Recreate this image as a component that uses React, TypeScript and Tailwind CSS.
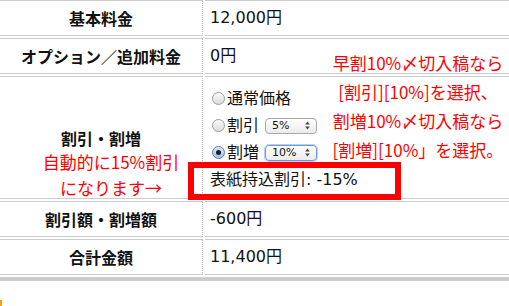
import type { ReactNode } from "react";

// 料金テーブルの1行
function Row({ label, tall, children }: { label: string; tall?: boolean; children: ReactNode }) {
  return (
    <div className={`flex gap-[2px] ${tall ? "h-[123px]" : "h-[36px]"}`}>
      <div className="flex w-[203px]">
        <div className="flex flex-1 items-center justify-center border-y border-[#cccccc] text-[16px] font-bold">
          {label}
        </div>
        <div className="w-0 border-l border-dotted border-[#bbbbbb]" />
      </div>
      <div className="flex flex-1 border-y border-[#cccccc] pl-[5px] font-['DejaVu_Sans','Noto_Sans_CJK_JP',sans-serif] text-[16px]">
        {children}
      </div>
    </div>
  );
}

function Radio({ checked }: { checked?: boolean }) {
  return (
    <span
      className={`mr-[2px] ml-[2px] flex h-[13px] w-[13px] items-center justify-center rounded-full border ${
        checked
          ? "border-[#5d7fae] bg-linear-to-b from-[#d6e6f8] to-[#a4c3ea]"
          : "border-[#9b9b9b] bg-linear-to-b from-[#fbfbfb] to-[#dcdcdc]"
      }`}
    >
      {checked && <span className="h-[5px] w-[5px] rounded-full bg-[#1d1d1d]" />}
    </span>
  );
}

function Select({ value, focused }: { value: string; focused?: boolean }) {
  return (
    <span
      className={`ml-[6px] flex h-[16px] w-[52px] items-center justify-between rounded-[4px] border bg-linear-to-b from-white to-[#ebebeb] pr-[6px] pl-[6px] text-[11px] leading-none ${
        focused ? "border-[#6f9bd6] shadow-[0_0_0_1px_#b4cff1]" : "border-[#a9a9a9]"
      }`}
    >
      <span>{value}</span>
      <svg width="5" height="9" viewBox="0 0 5 9">
        <path d="M2.5 0.5 L4.8 3.5 L0.2 3.5 Z" fill="#444" />
        <path d="M2.5 8.5 L4.8 5.5 L0.2 5.5 Z" fill="#444" />
      </svg>
    </span>
  );
}

export default function App() {
  return (
    <div className="relative h-[306px] w-[509px] overflow-hidden bg-white font-['Noto_Sans_CJK_JP','Noto_Sans',sans-serif] text-[#111]">
      <div className="flex flex-col gap-[2px]">
        <Row label="基本料金">
          <span className="self-center">12,000円</span>
        </Row>
        <Row label="オプション／追加料金">
          <span className="self-center">0円</span>
        </Row>
        <Row label="割引・割増" tall>
          <div className="flex flex-col pt-[8px]">
            <div className="flex h-[27px] items-center">
              <Radio />
              <span>通常価格</span>
            </div>
            <div className="flex h-[27px] items-center">
              <Radio />
              <span>割引</span>
              <Select value="5%" />
            </div>
            <div className="flex h-[27px] items-center">
              <Radio checked />
              <span>割増</span>
              <Select value="10%" focused />
            </div>
            <div className="flex h-[27px] items-center">表紙持込割引: -15%</div>
          </div>
        </Row>
        <Row label="割引額・割増額">
          <span className="self-center">-600円</span>
        </Row>
        <Row label="合計金額">
          <span className="self-center">11,400円</span>
        </Row>
      </div>
      <div className="mt-[2px] h-[4px] bg-[#cccccc]" />
      <div className="mt-[19px] h-[6px] w-[2px] bg-[#f5a300]" />

      {/* 注釈 */}
      <div className="absolute top-[48px] left-[328px] w-[180px] text-center text-[17px] leading-[29px] whitespace-nowrap text-[#ff0000]">
        <p>早割10%〆切入稿なら</p>
        <p>[割引][10%]を選択、</p>
        <p>割増10%〆切入稿なら</p>
        <p>[割増][10%」を選択。</p>
      </div>
      <div className="absolute top-[149px] left-0 w-[222px] text-center text-[17px] leading-[26px] whitespace-nowrap text-[#ff0000]">
        <p>自動的に15%割引</p>
        <p>になります→</p>
      </div>
      <div className="absolute top-[162px] left-[188px] h-[38px] w-[213px] border-[6px] border-[#ff0000]" />
    </div>
  );
}
